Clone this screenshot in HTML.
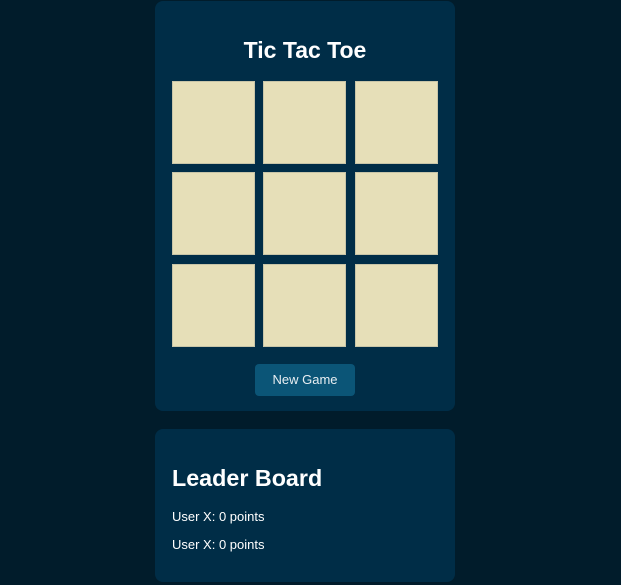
<!DOCTYPE html>
<html><head><style>
body{margin:0;background:#011c2b;font-family:"Liberation Sans",Arial,sans-serif;width:621px;height:585px;overflow:hidden;position:relative}
.card{position:absolute;left:155px;width:300px;background:#002d47;border-radius:8px}
.c1{top:1px;height:410px}
.c2{top:429px;height:153px}
h1{position:absolute;top:36px;left:0;width:300px;text-align:center;margin:0;color:#fff;font-size:23px;font-weight:bold}
.cell{position:absolute;width:81px;height:81px;background:#e6dfb8;border:1px solid #c8c5a8}
.btn{position:absolute;left:100px;top:363px;width:100px;height:32px;background:#0b5577;border-radius:4px;color:#e8eef2;font-size:13px;text-align:center;line-height:32px}
h2{position:absolute;left:17px;top:36px;margin:0;color:#fff;font-size:23.3px;font-weight:bold}
.p{position:absolute;left:17px;color:#fff;font-size:13px}
</style></head><body>
<div class="card c1">
<h1>Tic Tac Toe</h1>
<div class="cell" style="left:17px;top:80px"></div>
<div class="cell" style="left:108px;top:80px"></div>
<div class="cell" style="left:200px;top:80px"></div>
<div class="cell" style="left:17px;top:171px"></div>
<div class="cell" style="left:108px;top:171px"></div>
<div class="cell" style="left:200px;top:171px"></div>
<div class="cell" style="left:17px;top:263px"></div>
<div class="cell" style="left:108px;top:263px"></div>
<div class="cell" style="left:200px;top:263px"></div>
<div class="btn">New Game</div>
</div>
<div class="card c2">
<h2>Leader Board</h2>
<div class="p" style="top:80px">User X: 0 points</div>
<div class="p" style="top:108px">User X: 0 points</div>
</div>
</body></html>
